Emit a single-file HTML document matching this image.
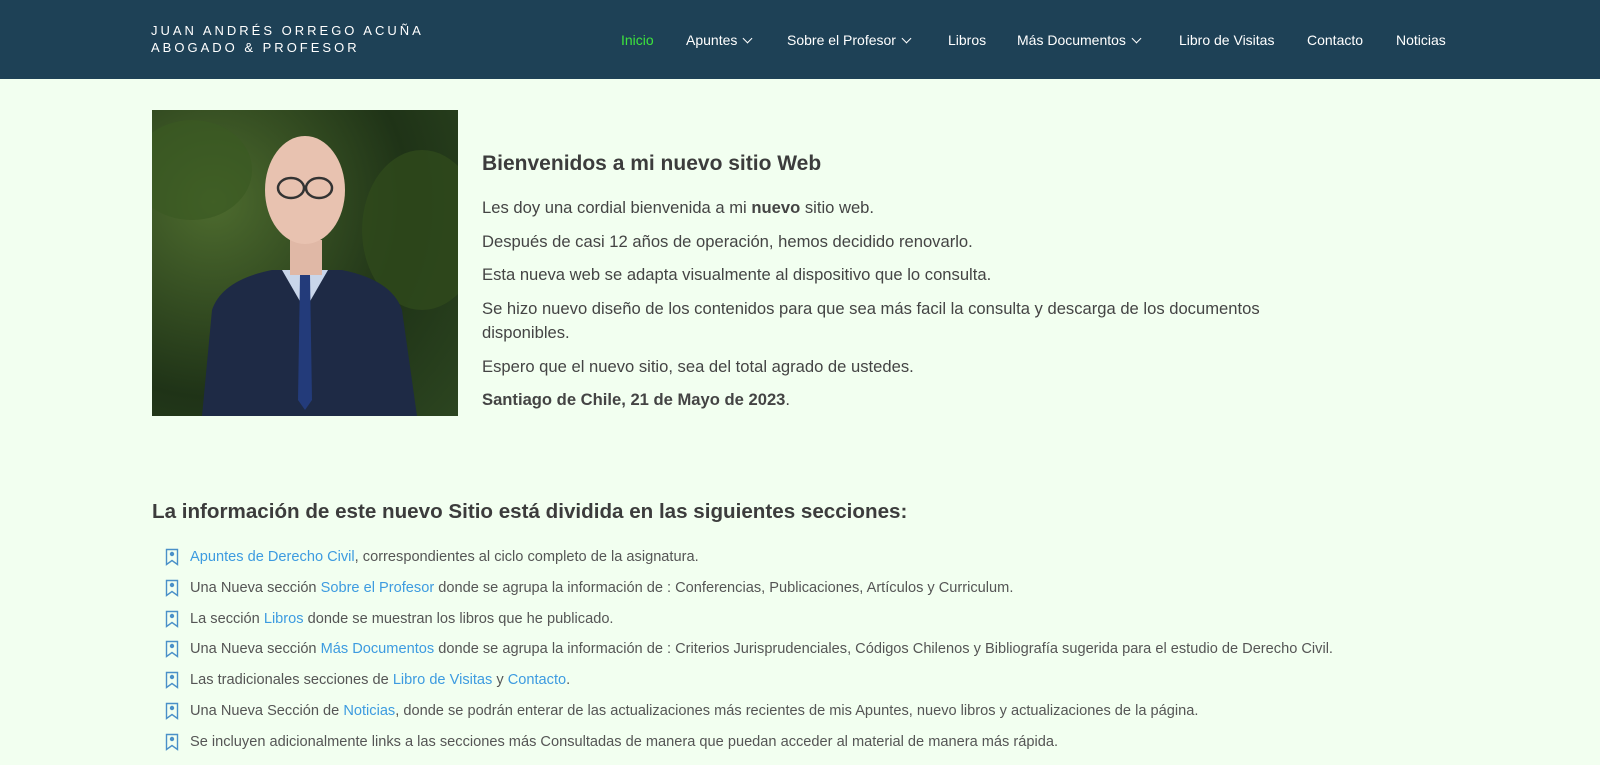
<!DOCTYPE html>
<html><head><meta charset="utf-8"><style>
*{margin:0;padding:0;box-sizing:border-box}
body{width:1600px;height:743px;overflow:hidden;background:#f2fff0;font-family:"Liberation Sans",sans-serif;color:#444}
.hdr{height:79px;background:#1e4156;position:relative}
.brand{position:absolute;left:151px;top:22px;color:#fff;font-size:13px;letter-spacing:3px;line-height:17px}
.nav{position:absolute;top:32px;left:0;right:0;font-size:14px;color:#fff}
.nav span{position:absolute;white-space:nowrap}
.chev{display:inline-block;width:7px;height:7px;border-right:1.2px solid #fff;border-bottom:1.2px solid #fff;transform:rotate(45deg);margin-left:7px;position:relative;top:-3px}
.photo{position:absolute;left:152px;top:110px;width:306px;height:306px;background:radial-gradient(circle at 20% 30%,#4d6b2e,#1f3317 60%,#2c4520);overflow:hidden}
h1{position:absolute;left:482px;top:152px;font-size:21px;font-weight:bold;color:#3c3c3c}
.txt{position:absolute;left:482px;top:196px;width:900px;font-size:16.6px;line-height:24.5px;color:#444}
.txt p{margin-bottom:9px}
h2{position:absolute;left:152px;top:500px;font-size:20.6px;font-weight:bold;color:#3c3c3c}
ul{position:absolute;left:165px;top:549px;list-style:none;font-size:14.6px;color:#555}
li{height:30.8px;position:relative;padding-left:25px;white-space:nowrap}
li svg{position:absolute;left:0;top:-1px}
a{color:#3d9be0;text-decoration:none}
</style></head><body>
<div class="hdr">
<div class="brand">JUAN ANDRÉS ORREGO ACUÑA<br>ABOGADO &amp; PROFESOR</div>
<div class="nav">
<span style="left:621px;color:#3de33d">Inicio</span>
<span style="left:686px">Apuntes<i class="chev"></i></span>
<span style="left:787px">Sobre el Profesor<i class="chev"></i></span>
<span style="left:948px">Libros</span>
<span style="left:1017px">Más Documentos<i class="chev"></i></span>
<span style="left:1179px">Libro de Visitas</span>
<span style="left:1307px">Contacto</span>
<span style="left:1396px">Noticias</span>
</div></div>
<div class="photo">
<svg width="306" height="306" viewBox="0 0 306 306">
<ellipse cx="40" cy="60" rx="60" ry="50" fill="#3a5a22" opacity=".7"/>
<ellipse cx="270" cy="120" rx="60" ry="80" fill="#2f4a1c" opacity=".8"/>
<path d="M50 306 L60 200 Q70 170 120 160 L190 160 Q240 170 250 200 L265 306Z" fill="#1e2a45"/>
<path d="M130 160 L153 200 L176 160Z" fill="#c9d6ea"/>
<path d="M148 165 L158 165 L160 290 L153 300 L146 290Z" fill="#233b7a"/>
<rect x="138" y="130" width="32" height="35" fill="#e0b8a6"/>
<ellipse cx="153" cy="80" rx="40" ry="54" fill="#e8c2b0"/>
<ellipse cx="139" cy="78" rx="13" ry="10" fill="none" stroke="#333" stroke-width="2.5"/>
<ellipse cx="167" cy="78" rx="13" ry="10" fill="none" stroke="#333" stroke-width="2.5"/>
</svg></div>
<h1>Bienvenidos a mi nuevo sitio Web</h1>
<div class="txt">
<p>Les doy una cordial bienvenida a mi <b>nuevo</b> sitio web.</p>
<p>Después de casi 12 años de operación, hemos decidido renovarlo.</p>
<p>Esta nueva web se adapta visualmente al dispositivo que lo consulta.</p>
<p>Se hizo nuevo diseño de los contenidos para que sea más facil la consulta y descarga de los documentos<br>disponibles.</p>
<p>Espero que el nuevo sitio, sea del total agrado de ustedes.</p>
<p><b>Santiago de Chile, 21 de Mayo de 2023</b>.</p>
</div>
<h2>La información de este nuevo Sitio está dividida en las siguientes secciones:</h2>
<ul>
<li><svg width="14" height="18"><path d="M1.5 1.5h11v15l-5.5-4-5.5 4z" fill="none" stroke="#4a90c8" stroke-width="1.4"/><circle cx="7" cy="6" r="2.2" fill="#4a90c8"/></svg><a>Apuntes de Derecho Civil</a>, correspondientes al ciclo completo de la asignatura.</li>
<li><svg width="14" height="18"><path d="M1.5 1.5h11v15l-5.5-4-5.5 4z" fill="none" stroke="#4a90c8" stroke-width="1.4"/><circle cx="7" cy="6" r="2.2" fill="#4a90c8"/></svg>Una Nueva sección <a>Sobre el Profesor</a> donde se agrupa la información de : Conferencias, Publicaciones, Artículos y Curriculum.</li>
<li><svg width="14" height="18"><path d="M1.5 1.5h11v15l-5.5-4-5.5 4z" fill="none" stroke="#4a90c8" stroke-width="1.4"/><circle cx="7" cy="6" r="2.2" fill="#4a90c8"/></svg>La sección <a>Libros</a> donde se muestran los libros que he publicado.</li>
<li><svg width="14" height="18"><path d="M1.5 1.5h11v15l-5.5-4-5.5 4z" fill="none" stroke="#4a90c8" stroke-width="1.4"/><circle cx="7" cy="6" r="2.2" fill="#4a90c8"/></svg>Una Nueva sección <a>Más Documentos</a> donde se agrupa la información de : Criterios Jurisprudenciales, Códigos Chilenos y Bibliografía sugerida para el estudio de Derecho Civil.</li>
<li><svg width="14" height="18"><path d="M1.5 1.5h11v15l-5.5-4-5.5 4z" fill="none" stroke="#4a90c8" stroke-width="1.4"/><circle cx="7" cy="6" r="2.2" fill="#4a90c8"/></svg>Las tradicionales secciones de <a>Libro de Visitas</a> y <a>Contacto</a>.</li>
<li><svg width="14" height="18"><path d="M1.5 1.5h11v15l-5.5-4-5.5 4z" fill="none" stroke="#4a90c8" stroke-width="1.4"/><circle cx="7" cy="6" r="2.2" fill="#4a90c8"/></svg>Una Nueva Sección de <a>Noticias</a>, donde se podrán enterar de las actualizaciones más recientes de mis Apuntes, nuevo libros y actualizaciones de la página.</li>
<li><svg width="14" height="18"><path d="M1.5 1.5h11v15l-5.5-4-5.5 4z" fill="none" stroke="#4a90c8" stroke-width="1.4"/><circle cx="7" cy="6" r="2.2" fill="#4a90c8"/></svg>Se incluyen adicionalmente links a las secciones más Consultadas de manera que puedan acceder al material de manera más rápida.</li>
</ul>
</body></html>
